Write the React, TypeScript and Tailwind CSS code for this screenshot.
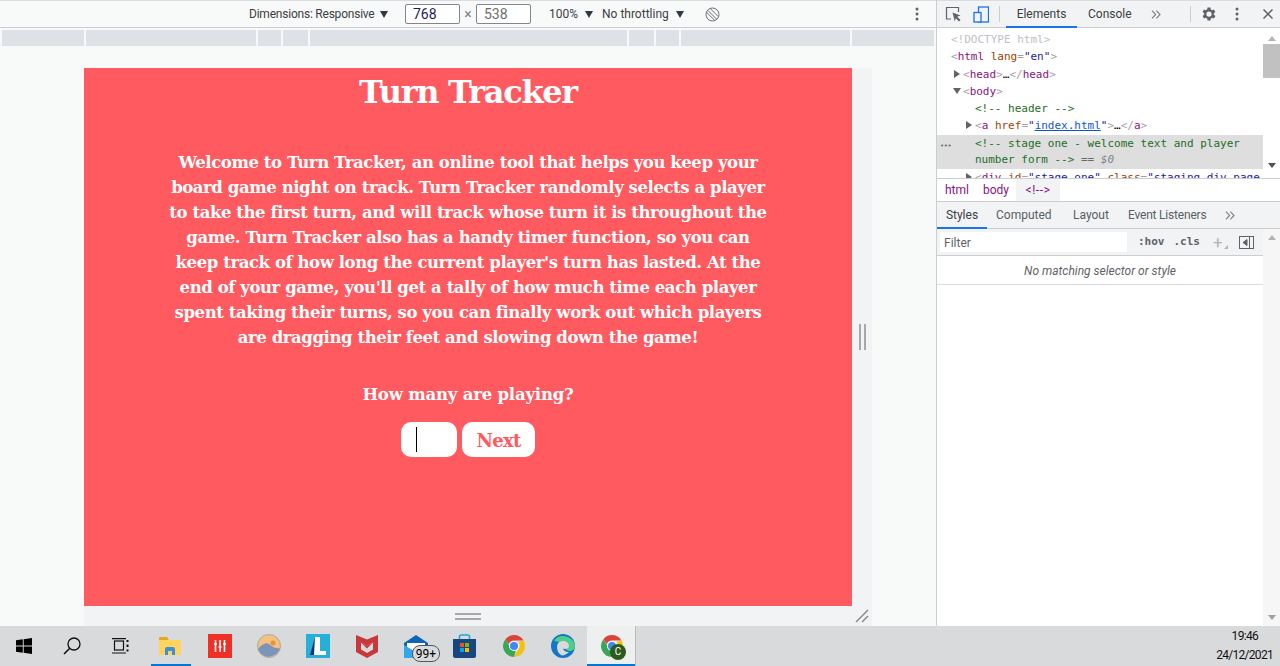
const sans = "font-['Roboto','Open_Sans',sans-serif]"
const mono = "font-['DejaVu_Sans_Mono',monospace]"
const slab = "font-['DejaVu_Serif',serif]"

const rulerSegments = [82, 170, 23, 25, 317, 25, 23, 169, 82]

function Caret({ className = "" }: { className?: string }) {
  return (
    <svg width="8" height="7" viewBox="0 0 8 7" className={className}>
      <path d="M0 0h8L4 7z" fill="#303942" />
    </svg>
  )
}

function Kebab() {
  return (
    <svg width="4" height="14" viewBox="0 0 4 14" className="block">
      <circle cx="2" cy="2" r="1.5" fill="#5f6368" />
      <circle cx="2" cy="7" r="1.5" fill="#5f6368" />
      <circle cx="2" cy="12" r="1.5" fill="#5f6368" />
    </svg>
  )
}

function Chevrons() {
  return (
    <svg width="10" height="9" viewBox="0 0 10 9" fill="none" stroke="#80868b" strokeWidth="1.2" className="block">
      <path d="M1 .7 4.600 4.500 1 8.300M5.400.7 9 4.500 5.400 8.300" />
    </svg>
  )
}

function DeviceToolbar() {
  return (
    <div className={`flex h-[28px] shrink-0 items-center border-y border-t-[#dadce0] border-b-[#cbcdd1] bg-[#f8f9f9] text-[12px] text-[#3c4043] ${sans}`}>
      <span className="ml-[249px] w-[126px] whitespace-nowrap tracking-[-0.22px]">Dimensions: Responsive</span>
      <Caret className="ml-[5px]" />
      <div className="ml-[17px] flex h-[20px] w-[55px] items-center rounded-[2px] border border-[#80868b] bg-white pl-[7px] text-[14px] text-[#1c1c5a]">768</div>
      <span className="w-[16px] text-center text-[14px] text-[#80868b]">×</span>
      <div className="flex h-[20px] w-[55px] items-center rounded-[2px] border border-[#80868b] bg-white pl-[7px] text-[14px] text-[#6e6e6e]">538</div>
      <span className="ml-[18px] w-[30px] whitespace-nowrap">100%</span>
      <Caret className="ml-[6px]" />
      <span className="ml-[9px] w-[70px] whitespace-nowrap">No throttling</span>
      <Caret className="ml-[4px]" />
      <svg width="15" height="15" viewBox="0 0 15 15" className="ml-[21px]" fill="none" stroke="#6e7175" strokeWidth="1">
        <circle cx="7.500" cy="7.500" r="6.500" />
        <path d="M3 3.500 11.500 12M5.500 1.800l7.700 7.700M1.800 5.500l7.700 7.700" />
      </svg>
      <span className="ml-[195px]"><Kebab /></span>
    </div>
  )
}

function Ruler() {
  return (
    <div className="mt-[2px] flex h-[16px] shrink-0 gap-[2px] px-[2px]">
      {rulerSegments.map((w, i) => (
        <div key={i} className="h-full bg-[#dee1e6]" style={{ width: w }} />
      ))}
    </div>
  )
}

function Viewport() {
  return (
    <div className="ml-[84px] mt-[22px] flex min-h-0 w-[788px] flex-1 flex-col bg-[#f1f3f4]">
      <div className="flex h-[538px] shrink-0">
        <div className={`flex w-[768px] flex-col items-center bg-[#ff5a5f] text-white ${slab} font-bold`}>
          <h1 className="mt-[3px] text-[32px] leading-[42px] tracking-[-1.3px]">Turn Tracker</h1>
          <p className="mt-[37px] whitespace-nowrap text-center text-[16.5px] leading-[25px] tracking-[-0.42px]">
            Welcome to Turn Tracker, an online tool that helps you keep your<br />
            board game night on track. Turn Tracker randomly selects a player<br />
            to take the first turn, and will track whose turn it is throughout the<br />
            game. Turn Tracker also has a handy timer function, so you can<br />
            keep track of how long the current player's turn has lasted. At the<br />
            end of your game, you'll get a tally of how much time each player<br />
            spent taking their turns, so you can finally work out which players<br />
            are dragging their feet and slowing down the game!
          </p>
          <p className="mt-[32px] text-[16.5px] leading-[25px] tracking-[-0.2px]">How many are playing?</p>
          <div className="mt-[15px] flex gap-[5px]">
            <div className="flex h-[35px] w-[56px] items-center rounded-[10px] bg-white pl-[15px]">
              <div className="h-[25px] w-px bg-black" />
            </div>
            <div className="flex h-[35px] w-[73px] items-center justify-center rounded-[10px] bg-white pt-[2px] text-[18px] tracking-[-0.7px] text-[#ff5a5f]">Next</div>
          </div>
        </div>
        {/* Side resize handle */}
        <div className="flex flex-1 items-center justify-center">
          <div className="flex gap-[3px]">
            <div className="h-[26px] w-[2px] bg-[#a8a8a8]" />
            <div className="h-[26px] w-[2px] bg-[#a8a8a8]" />
          </div>
        </div>
      </div>
      <div className="relative flex flex-1 items-center justify-center pr-[20px]">
        <div className="flex flex-col gap-[3px]">
          <div className="h-[2px] w-[26px] bg-[#a8a8a8]" />
          <div className="h-[2px] w-[26px] bg-[#a8a8a8]" />
        </div>
        <svg width="14" height="14" viewBox="0 0 14 14" className="absolute bottom-[3px] right-[3px]" stroke="#8a8a8a" strokeWidth="1.500">
          <path d="M1 13 13 1M7 13l6-6" />
        </svg>
      </div>
    </div>
  )
}

const Tag = ({ children }: { children: React.ReactNode }) => <span className="text-[#881280]">{children}</span>
const Br = ({ children }: { children: React.ReactNode }) => <span className="text-[#a8a0a0]">{children}</span>
const Note = ({ children }: { children: React.ReactNode }) => <span className="text-[#236e25]">{children}</span>

function DomLine({ pad, arrow, children }: { pad: number; arrow?: "r" | "d"; children: React.ReactNode }) {
  return (
    <div className="relative h-[17.3px] whitespace-nowrap leading-[17.3px]" style={{ paddingLeft: pad }}>
      {arrow === "r" && (
        <svg width="6" height="8" viewBox="0 0 6 8" className="absolute top-[4px]" style={{ left: pad - 9 }}>
          <path d="M0 0l6 4-6 4z" fill="#5f6368" />
        </svg>
      )}
      {arrow === "d" && (
        <svg width="8" height="6" viewBox="0 0 8 6" className="absolute top-[5px]" style={{ left: pad - 10 }}>
          <path d="M0 0h8L4 6z" fill="#5f6368" />
        </svg>
      )}
      {children}
    </div>
  )
}

function ElementsTree() {
  return (
    <div className="relative flex h-[150px] shrink-0 overflow-hidden">
      <div className={`w-[326px] overflow-hidden pt-[3px] text-[11px] ${mono}`}>
        <DomLine pad={14}><span className="text-[#bdc1c6]">{"<!DOCTYPE html>"}</span></DomLine>
        <DomLine pad={14}><Br>{"<"}</Br><Tag>html</Tag> <span className="text-[#994500]">lang</span><Br>=</Br><span className="text-[#1a1aa6]">"en"</span><Br>{">"}</Br></DomLine>
        <DomLine pad={26} arrow="r"><Br>{"<"}</Br><Tag>head</Tag><Br>{">"}</Br>…<Br>{"</"}</Br><Tag>head</Tag><Br>{">"}</Br></DomLine>
        <DomLine pad={26} arrow="d"><Br>{"<"}</Br><Tag>body</Tag><Br>{">"}</Br></DomLine>
        <DomLine pad={38}><Note>{"<!-- header -->"}</Note></DomLine>
        <DomLine pad={38} arrow="r"><Br>{"<"}</Br><Tag>a</Tag> <span className="text-[#994500]">href</span><Br>=</Br><span className="text-[#1a1aa6]">"<span className="text-[#1155cc] underline">index.html</span>"</span><Br>{">"}</Br>…<Br>{"</"}</Br><Tag>a</Tag><Br>{">"}</Br></DomLine>
        <div className="relative h-[34px] bg-[#dedede] pl-[38px] pt-[1px] leading-[16px]">
          <span className="absolute left-[3px] top-[3px] text-[7px] tracking-[-0.5px] text-[#666]">•••</span>
          <Note>{"<!-- stage one - welcome text and player"}</Note><br />
          <Note>{"number form -->"}</Note> <span className="text-[#6a6a6a]">==</span> <span className="italic text-[#80868b]">$0</span>
        </div>
        <DomLine pad={38} arrow="r"><Br>{"<"}</Br><Tag>div</Tag> <span className="text-[#994500]">id</span><Br>=</Br><span className="text-[#1a1aa6]">"stage-one"</span> <span className="text-[#994500]">class</span><Br>=</Br><span className="text-[#1a1aa6]">"staging-div page</span></DomLine>
      </div>
      {/* Elements scrollbar */}
      <div className="flex w-[17px] flex-col items-center bg-white">
        <svg width="8" height="5" viewBox="0 0 8 5" className="mt-[8px]"><path d="M4 0l4 5H0z" fill="#b4b4b4" /></svg>
        <div className="mt-[3px] h-[34px] w-full bg-[#c1c1c1]" />
        <svg width="8" height="5" viewBox="0 0 8 5" className="mt-[85px]"><path d="M0 0h8L4 5z" fill="#505050" /></svg>
      </div>
    </div>
  )
}

function DevTools() {
  return (
    <div className={`flex w-[344px] shrink-0 flex-col border-l border-[#cbcdd1] bg-white text-[12px] ${sans}`}>
      {/* Main tab strip */}
      <div className="flex h-[28px] shrink-0 items-center border-y border-t-[#dadce0] border-b-[#cbcdd1] bg-[#f1f3f4] text-[#3c4043]">
        <svg width="18" height="17" viewBox="0 0 18 17" className="ml-[8px]" fill="none">
          <path d="M6 13H1.500V1.500h12V6" stroke="#5f6368" strokeWidth="1.200" />
          <path d="M7.500 6.500l8 3-3.300 1.200L15.500 14l-1.500 1.500-3.200-3.300-1 3.300z" fill="#5f6368" />
        </svg>
        <svg width="16" height="17" viewBox="0 0 16 17" className="ml-[10px]" fill="none" stroke="#1a73e8" strokeWidth="1.300">
          <rect x="5.500" y="1" width="10" height="15" />
          <rect x="1" y="6.500" width="7" height="9.500" fill="#f1f3f4" />
        </svg>
        <div className="ml-[10px] h-[16px] w-px bg-[#cbcdd1]" />
        <div className="relative ml-[6px] flex h-full w-[71px] items-center justify-center">
          Elements
          <div className="absolute bottom-[-1px] left-0 h-[2px] w-full bg-[#1a73e8]" />
        </div>
        <span className="ml-[11px] w-[43px]">Console</span>
        <span className="ml-[20px]"><Chevrons /></span>
        <div className="ml-[29px] h-[16px] w-px bg-[#cbcdd1]" />
        <svg width="18" height="18" viewBox="0 0 24 24" className="ml-[9px]" fill="#5f6368">
          <path d="M19.400 13a7.500 7.500 0 0 0 0-2l2.100-1.600-2-3.500-2.500 1a7.500 7.500 0 0 0-1.700-1L15 3.300h-4l-.4 2.600a7.500 7.500 0 0 0-1.700 1l-2.500-1-2 3.500L6.500 11a7.500 7.500 0 0 0 0 2l-2.100 1.600 2 3.500 2.500-1a7.500 7.500 0 0 0 1.700 1l.4 2.600h4l.4-2.600a7.500 7.500 0 0 0 1.700-1l2.500 1 2-3.500zM13 15.500a3.500 3.500 0 1 1 0-7 3.500 3.500 0 0 1 0 7z" transform="translate(-1 0)" />
        </svg>
        <span className="ml-[17px]"><Kebab /></span>
        <svg width="10" height="10" viewBox="0 0 10 10" className="ml-[24px]" stroke="#5f6368" strokeWidth="1.500">
          <path d="M.5.500l9 9M9.500.500l-9 9" />
        </svg>
      </div>

      <ElementsTree />

      {/* Breadcrumbs */}
      <div className="flex h-[24px] shrink-0 items-center border-y border-[#cbcdd1] pl-[8px] text-[#881280]">
        <span>html</span>
        <span className="ml-[14px]">body</span>
        <span className="ml-[7px] flex h-full w-[44px] items-center justify-center bg-[#f1f3f4] tracking-[0.6px]">{"<!-->"}</span>
      </div>

      {/* Sidebar tabs */}
      <div className="flex h-[27px] shrink-0 items-center border-b border-[#cbcdd1] bg-[#f1f3f4] text-[#5a5f64]">
        <div className="relative flex h-full w-[50px] items-center justify-center text-[#3c4043]">
          Styles
          <div className="absolute bottom-[-1px] left-0 h-[2px] w-full bg-[#1a73e8]" />
        </div>
        <span className="ml-[9px] w-[56px]">Computed</span>
        <span className="ml-[21px] w-[35px]">Layout</span>
        <span className="ml-[20px] w-[78px] whitespace-nowrap tracking-[-0.2px]">Event Listeners</span>
        <span className="ml-[19px]"><Chevrons /></span>
      </div>

      <div className="flex min-h-0 flex-1">
        <div className="flex w-[326px] flex-col">
          {/* Filter row */}
          <div className="flex h-[27px] shrink-0 items-center border-b border-[#cbcdd1] bg-[#f1f3f4] pl-[3px] text-[#5f6368]">
            <div className="flex h-[20px] w-[187px] items-center bg-white pl-[4px] pt-[1px]">Filter</div>
            <span className={`ml-[11px] text-[11px] font-bold ${mono}`}>:hov</span>
            <span className={`ml-[9px] text-[11px] font-bold ${mono}`}>.cls</span>
            <span className="ml-[13px] text-[17px] leading-none text-[#b4b4b4]">+</span>
            <svg width="4" height="4" viewBox="0 0 4 4" className="mb-[-10px] ml-[1px]"><path d="M4 0v4H0z" fill="#b4b4b4" /></svg>
            <svg width="15" height="13" viewBox="0 0 15 13" className="ml-[11px]" fill="none" stroke="#5f6368">
              <rect x=".5" y=".5" width="14" height="12" />
              <path d="M10.500 0v13" />
              <path d="M8 3.500v6L4 6.500z" fill="#5f6368" />
            </svg>
          </div>
          <div className="flex h-[29px] shrink-0 items-center justify-center border-b border-[#dadce0] pt-[2px] italic text-[#5f6368]">
            No matching selector or style
          </div>
        </div>
        {/* Styles scrollbar */}
        <div className="flex w-[17px] flex-col items-center justify-between bg-[#f6f6f6] py-[6px]">
          <svg width="8" height="5" viewBox="0 0 8 5"><path d="M4 0l4 5H0z" fill="#b4b4b4" /></svg>
          <svg width="8" height="5" viewBox="0 0 8 5"><path d="M0 0h8L4 5z" fill="#a0a0a0" /></svg>
        </div>
      </div>
    </div>
  )
}

function ChromeIcon({ size = 24 }: { size?: number }) {
  return (
    <svg width={size} height={size} viewBox="0 0 24 24">
      <path d="M12 1a11 11 0 0 1 9.500 5.500H12a5.500 5.500 0 0 0-5.200 3.700L3.400 5.200A11 11 0 0 1 12 1z" fill="#db4437" />
      <path d="M21.500 6.500A11 11 0 0 1 12 23l4.700-8.200A5.500 5.500 0 0 0 16.500 8z" fill="#f4c20d" />
      <path d="M3.400 5.200 8 13a5 5 0 0 0 6 3.300L12 23A11 11 0 0 1 3.400 5.200z" fill="#3aa757" />
      <circle cx="12" cy="12" r="5" fill="#fff" />
      <circle cx="12" cy="12" r="4" fill="#4285f4" />
    </svg>
  )
}

function TaskSlot({ w = 49, active, children }: { w?: number; active?: boolean; children: React.ReactNode }) {
  return (
    <div className={`relative flex h-full shrink-0 items-center justify-center ${active ? "bg-[#eef0f0]" : ""}`} style={{ width: w }}>
      {children}
    </div>
  )
}

function Taskbar() {
  return (
    <div className={`flex h-[40px] shrink-0 items-center bg-[#d9dadb] ${sans}`}>
      <TaskSlot w={48}>
        <svg width="16" height="16" viewBox="0 0 16 16" fill="#000">
          <path d="M0 2.300 6.800 1.300v6.200H0zM7.700 1.200 16 0v7.500H7.700zM0 8.400h6.800v6.300L0 13.700zM7.700 8.400H16V16l-8.300-1.200z" />
        </svg>
      </TaskSlot>
      <TaskSlot w={48}>
        <svg width="18" height="18" viewBox="0 0 18 18" fill="none" stroke="#111" strokeWidth="1.300">
          <circle cx="11" cy="7" r="6" />
          <path d="M6.800 11.200 1 17" strokeWidth="1.600" />
        </svg>
      </TaskSlot>
      <TaskSlot w={49}>
        <svg width="17" height="16" viewBox="0 0 17 16" fill="none" stroke="#111" strokeWidth="1.200">
          <rect x="2.500" y="3" width="9" height="9" />
          <path d="M0 .6h14M0 15h14" />
          <path d="M15.500 2v2M15.500 6.500v2.500M15.500 11.500v2" strokeWidth="2" />
        </svg>
      </TaskSlot>
      <TaskSlot w={50}>
        <svg width="22" height="18" viewBox="0 0 22 18">
          <path d="M0 1a1 1 0 0 1 1-1h7l2 3H0z" fill="#e5a823" />
          <path d="M0 3h21a1 1 0 0 1 1 1v13a1 1 0 0 1-1 1H1a1 1 0 0 1-1-1z" fill="#ffd35c" />
          <path d="M6 18v-6a2 2 0 0 1 2-2h6a2 2 0 0 1 2 2v6h-3v-4H9v4z" fill="#3b90d8" />
        </svg>
        <div className="absolute bottom-0 left-[6px] h-[2px] w-[40px] bg-[#0078d7]" />
      </TaskSlot>
      <TaskSlot>
        <div className="flex h-[24px] w-[24px] items-center justify-center gap-[2px] bg-[#ee3124]">
          <svg width="12" height="12" viewBox="0 0 12 12" stroke="#fff" strokeWidth="1.600">
            <path d="M1.500 0v12M6 0v12M10.500 0v12" />
            <path d="M0 4h3M4.500 7h3M9 4h3" strokeWidth="1.300" />
          </svg>
        </div>
      </TaskSlot>
      <TaskSlot>
        <svg width="24" height="24" viewBox="0 0 24 24">
          <circle cx="12" cy="12" r="11.500" fill="#f4c27f" stroke="#a9a9a9" />
          <circle cx="16" cy="9" r="2.500" fill="#ee8f3c" />
          <path d="M1 15c4-5 8-7 11-5s5 5 11 4a11.500 11.500 0 0 1-22 1z" fill="#7c93ba" />
        </svg>
      </TaskSlot>
      <TaskSlot>
        <div className="flex h-[24px] w-[24px] items-center justify-center bg-[#25afd9]">
          <svg width="16" height="18" viewBox="0 0 16 18">
            <path d="M5 0 0 18h6z" fill="#14307a" />
            <path d="M5 0h5v14h6v4H4z" fill="#fff" />
          </svg>
        </div>
      </TaskSlot>
      <TaskSlot>
        <svg width="22" height="24" viewBox="0 0 22 24">
          <path d="M0 1l11 4.500L22 1v17l-11 6-11-6z" fill="#c8373a" />
          <path d="M5 8.500l6 3 6-3v7l-6 3.500-6-3.500z" fill="#d9dadb" />
          <path d="M5 8.500l6 3 6-3-6 6z" fill="#c8373a" />
        </svg>
      </TaskSlot>
      <TaskSlot>
        <svg width="24" height="23" viewBox="0 0 24 23">
          <path d="M12 0l12 8v14H0V8z" fill="#0f66b7" />
          <path d="M3 8h18v8H3z" fill="#fff" />
          <path d="M0 10l12 7 12-7v13H0z" fill="#32a8ea" />
        </svg>
        <div className="absolute left-[21px] top-[19px] flex h-[17px] w-[28px] items-center justify-center rounded-[8px] border border-[#555] bg-[#d9dadb] text-[12px] leading-none text-black">99+</div>
      </TaskSlot>
      <TaskSlot>
        <svg width="23" height="24" viewBox="0 0 23 24">
          <path d="M6.500 6V2a1.500 1.500 0 0 1 1.500-1h7a1.500 1.500 0 0 1 1.500 1v4" fill="none" stroke="#21a7e0" strokeWidth="1.600" />
          <path d="M0 5h23v17a2 2 0 0 1-2 2H2a2 2 0 0 1-2-2z" fill="#17477f" />
          <path d="M7 9h4v4H7z" fill="#f25022" />
          <path d="M12 9h4v4h-4z" fill="#7fba00" />
          <path d="M7 14h4v4H7z" fill="#00a4ef" />
          <path d="M12 14h4v4h-4z" fill="#ffb900" />
        </svg>
      </TaskSlot>
      <TaskSlot><ChromeIcon /></TaskSlot>
      <TaskSlot>
        <svg width="24" height="24" viewBox="0 0 24 24">
          <circle cx="12" cy="12" r="12" fill="#1277c9" />
          <path d="M3 6.500A12 12 0 0 1 24 12c0 3.500-3 5.500-6 5-3-.5-4-3-3-5-2-3-7-3.500-12-5.500z" fill="#4ccf8a" />
          <path d="M6 13c0-4 3-6 6-6s6 2 6 5c0 2-2 3-4 3-1 0-2-.5-2-1.500 0 3 3 5 6 4.500a12 12 0 0 1-6 3.500c-3.500 0-6-4.500-6-8.500z" fill="#d9dadb" />
        </svg>
      </TaskSlot>
      <TaskSlot active>
        <ChromeIcon />
        <div className="absolute left-[23px] top-[18px] flex h-[16px] w-[16px] items-center justify-center rounded-full bg-[#2c5b1d] text-[10px] leading-none text-white">C</div>
        <div className="absolute bottom-0 left-0 h-[2px] w-full bg-[#0078d7]" />
        <div className="absolute right-0 top-0 h-full w-px bg-[#bcbcbc]" />
      </TaskSlot>
      <div className="ml-auto mr-[7px] text-right text-[12px] leading-[19px] tracking-[-0.7px] text-[#111]">
        <div className="mr-[15px]">19:46</div>
        <div>24/12/2021</div>
      </div>
    </div>
  )
}

export default function App() {
  return (
    <div className="flex h-[666px] w-[1280px] flex-col overflow-hidden bg-white">
      <div className="flex min-h-0 flex-1">
        <div className="flex w-[936px] shrink-0 flex-col bg-[#f8f9f9]">
          <DeviceToolbar />
          <Ruler />
          <Viewport />
        </div>
        <DevTools />
      </div>
      <Taskbar />
    </div>
  )
}
